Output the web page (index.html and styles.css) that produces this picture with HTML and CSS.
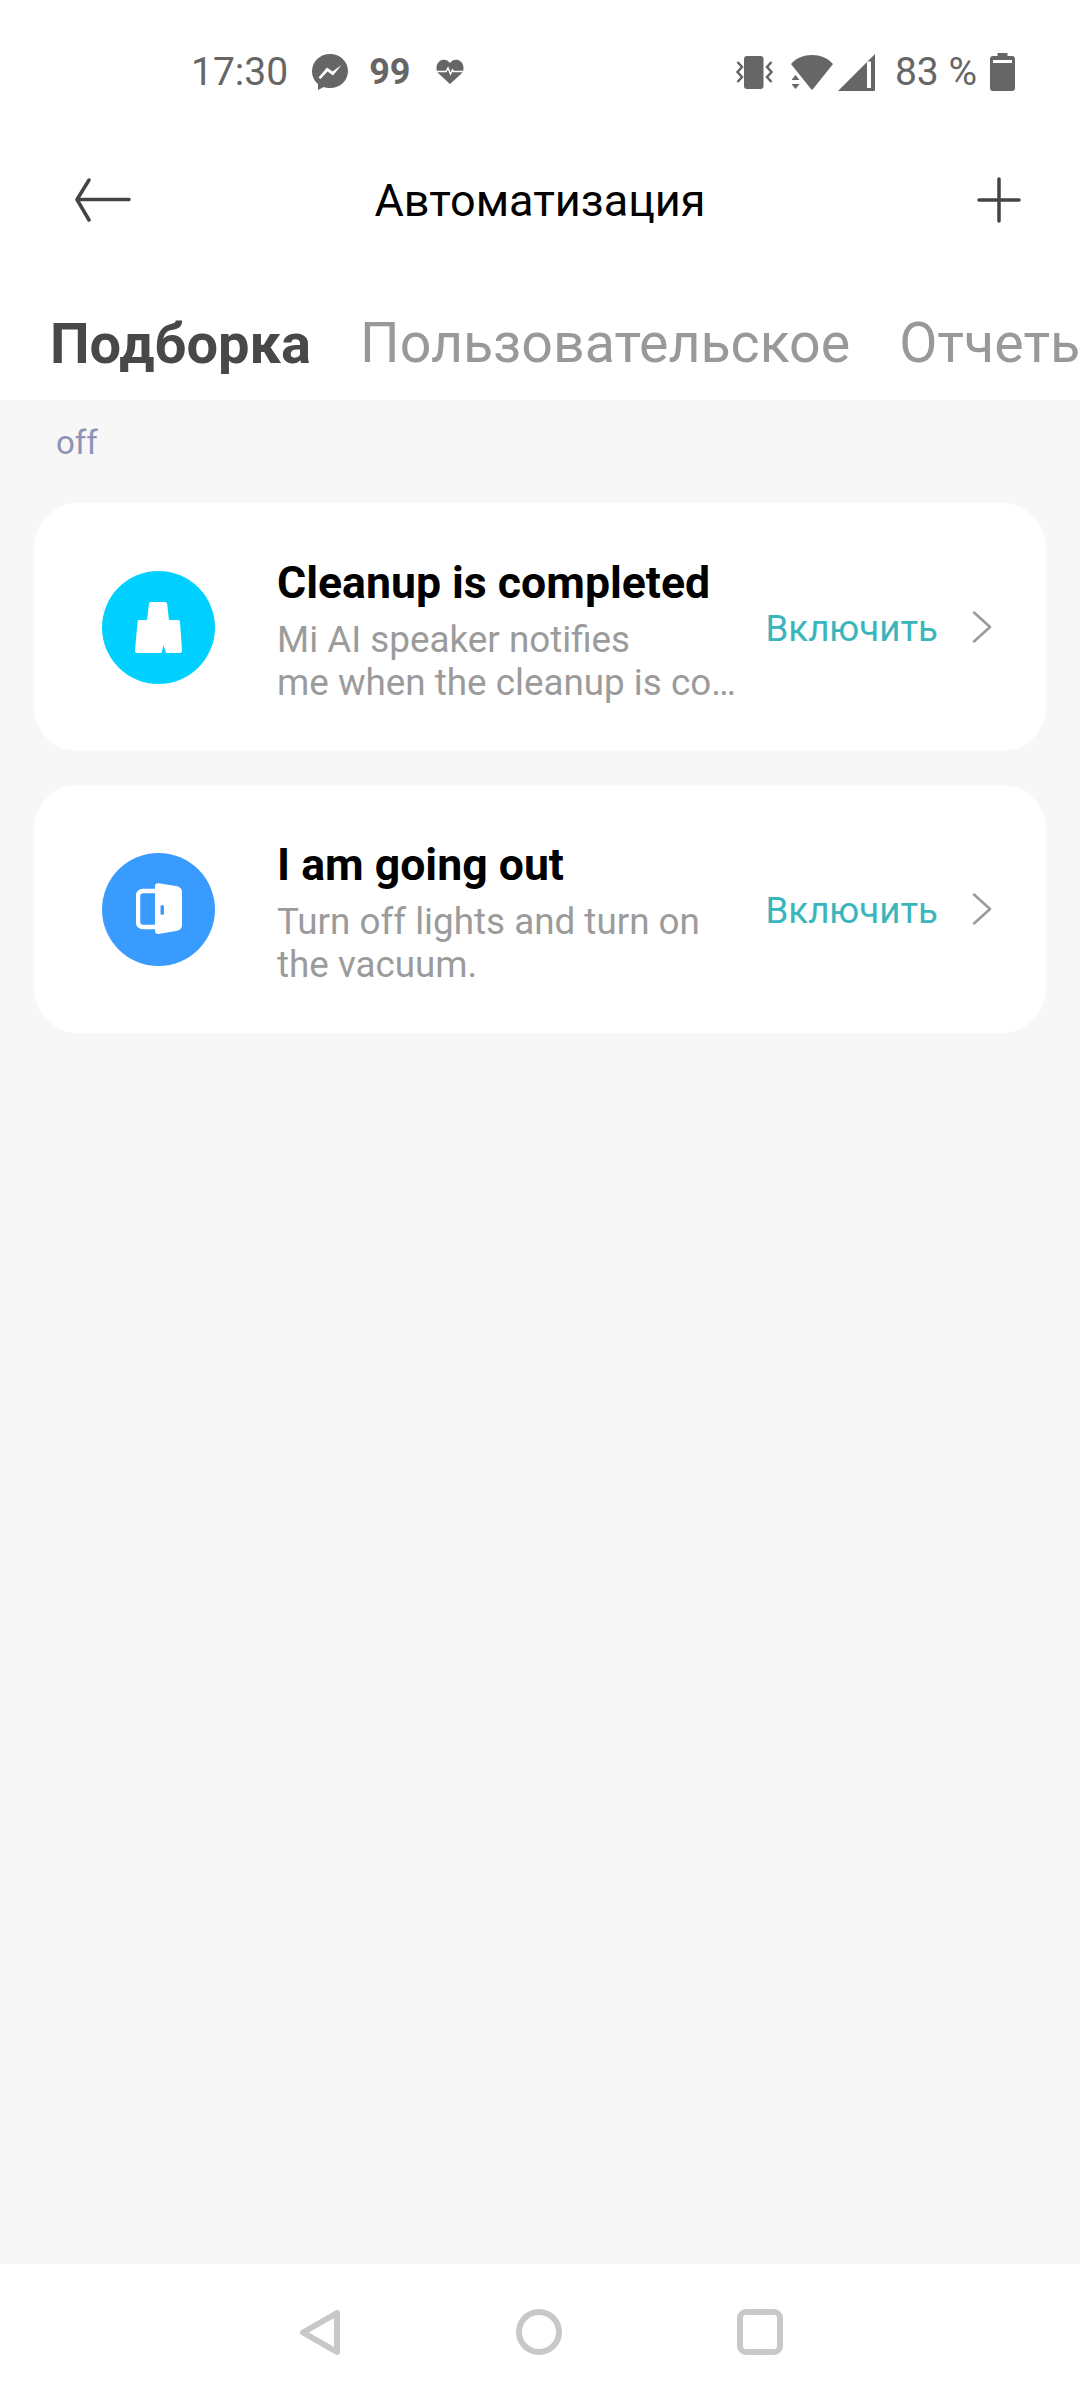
FILE: index.html
```html
<!DOCTYPE html>
<html>
<head>
    <title>Автоматизация</title>
    <link rel="stylesheet" href="styles.css">
</head>
<body>
    <div class="top">
        <div class="status">
            <div class="status-left">
                <span class="time">17:30</span>
                <svg class="ic-msg" width="36" height="36" viewBox="0 0 36 36"><path fill="#666" d="M18 0C8 0 0 7.500 0 17.500C0 22.600 2.200 27 6 30L6 36L11.800 33C13.500 33.600 15.700 34 18 34C28 34 36 26.900 36 17C36 7.500 28 0 18 0Z"/><path fill="#fff" d="M6.500 23.500L15 13.500L20.500 17.500L29.500 11L21 21.500L15.500 17.500L8.500 25Z"/></svg>
                <span class="count">99</span>
                <svg class="ic-heart" width="28" height="26" viewBox="0 0 28 26"><path fill="#666" d="M14 25L2.500 14.500C-0.500 11 0 5.500 3 2.700C6.500 -0.500 11.500 0.300 14 4C16.500 0.300 21.500 -0.500 25 2.700C28 5.500 28.500 11 25.500 14.500Z"/><path fill="none" stroke="#fff" stroke-width="1.500" d="M0 12.500H10L12 9L14.500 15L16.500 11L17.500 12.500H28"/></svg>
            </div>
            <div class="status-right">
                <svg class="ic-vib" width="37" height="33" viewBox="0 0 37 33"><rect x="8" y="0" width="19.500" height="33" rx="3" fill="#666"/><path fill="none" stroke="#666" stroke-width="2.500" d="M1.500 6L6 11L1.500 16L6 21L1.500 26M35.500 6L31 11L35.500 16L31 21L35.500 26"/></svg>
                <svg class="ic-wifi" width="42" height="35" viewBox="0 0 42 35"><path fill="#666" d="M0 9C5 3 13 0 21 0C29 0 37 3 42 9L22 34C21.500 34.700 20.500 34.700 20 34Z"/><path fill="#666" d="M4.500 20L8.500 25H0.500ZM4.500 34L0.500 29H8.500Z"/></svg>
                <svg class="ic-signal" width="37" height="37" viewBox="0 0 37 37"><path fill="#666" d="M37 0V35.500C37 36.500 36.500 37 35.500 37H0Z"/><path fill="#fff" d="M29 7.500H33V34H29Z"/></svg>
                <span class="batt-text">83 %</span>
                <svg class="ic-batt" width="25" height="38" viewBox="0 0 25 38"><path fill="#666" d="M7.500 0H17.500V3H22C24 3 25 4 25 6V35C25 37 24 38 22 38H3C1 38 0 37 0 35V6C0 4 1 3 3 3H7.500Z"/><rect x="3" y="7" width="19" height="3" fill="#fff"/></svg>
            </div>
        </div>

        <div class="header">
            <svg class="ic-back" width="56" height="44" viewBox="0 0 56 44"><path fill="none" stroke="#444" stroke-width="3.500" stroke-linecap="round" stroke-linejoin="round" d="M54 21.500H2M14 2L2 21.500L14 42"/></svg>
            <h1>Автоматизация</h1>
            <svg class="ic-plus" width="44" height="46" viewBox="0 0 44 46"><path fill="none" stroke="#444" stroke-width="3.500" stroke-linecap="round" d="M22 2V44M2 23H42"/></svg>
        </div>

        <div class="tabs">
            <span class="tab active">Подборка</span>
            <span class="tab">Пользовательское</span>
            <span class="tab">Отчеты</span>
        </div>
    </div>

    <div class="content">
        <div class="section-label">off</div>

        <div class="card">
            <div class="round cyan">
                <svg width="47" height="51" viewBox="0 0 47 51"><path fill="#fff" d="M16 0H30C31.500 0 32 1 32.200 2L34 18H43C44.500 18 45 19 45 20L47 48.500C47 50 46.500 51 45 51H31L28.500 43L26.500 51H2C0.500 51 0 50 0 48.500L2.500 20C2.500 19 3 18 4.500 18H12L14 2C14 1 14.500 0 16 0Z"/></svg>
            </div>
            <div class="card-text">
                <div class="card-title">Cleanup is completed</div>
                <div class="card-desc">Mi AI speaker notifies<br>me when the cleanup is co…</div>
            </div>
            <span class="action">Включить</span>
            <svg class="ic-chevron" width="20" height="32" viewBox="0 0 20 32"><path fill="none" stroke="#999" stroke-width="2.500" stroke-linecap="round" stroke-linejoin="round" d="M2 1.500L18 16L2 30.500"/></svg>
        </div>

        <div class="card">
            <div class="round blue">
                <svg width="46" height="52" viewBox="0 0 46 52"><path fill="none" stroke="#fff" stroke-width="4.500" d="M20 8H7C4 8 2 10 2 13V39C2 42 4 44 7 44H20"/><path fill="#fff" d="M19 3C19 1 20.500 0 22.500 0.300L40 3C43.500 3.500 46 5.500 46 9V42C46 45.500 43.500 47.500 40 48L22.500 51C20.500 51.300 19 50 19 48Z"/><rect x="24.500" y="22" width="3.500" height="10" rx="1.700" fill="#3a9bff"/></svg>
            </div>
            <div class="card-text">
                <div class="card-title">I am going out</div>
                <div class="card-desc">Turn off lights and turn on<br>the vacuum.</div>
            </div>
            <span class="action">Включить</span>
            <svg class="ic-chevron" width="20" height="32" viewBox="0 0 20 32"><path fill="none" stroke="#999" stroke-width="2.500" stroke-linecap="round" stroke-linejoin="round" d="M2 1.500L18 16L2 30.500"/></svg>
        </div>
    </div>

    <div class="navbar">
        <svg width="42" height="47" viewBox="0 0 42 47"><path fill="none" stroke="#c8c8c8" stroke-width="6" stroke-linejoin="round" d="M38 4V43L4 23.500Z"/></svg>
        <svg width="46" height="46" viewBox="0 0 46 46"><circle cx="23" cy="23" r="20" fill="none" stroke="#c8c8c8" stroke-width="6"/></svg>
        <svg width="46" height="46" viewBox="0 0 46 46"><rect x="3" y="3" width="40" height="40" rx="6" fill="none" stroke="#c8c8c8" stroke-width="6"/></svg>
    </div>
</body>
</html>
```

FILE: styles.css
```css
html, body {
    margin: 0;
    padding: 0;
}

body {
    width: 1080px;
    height: 2400px;
    overflow: hidden;
    display: flex;
    flex-direction: column;
    font-family: Roboto, sans-serif;
    background-color: #f7f7f7;
}

.top {
    background-color: #fff;
    height: 400px;
}

.status {
    height: 72px;
    padding: 36px 65px 0 191px;
    display: flex;
    align-items: center;
    justify-content: space-between;
    color: #666;
}

.status-left,
.status-right {
    display: flex;
    align-items: center;
}

.time {
    font-size: 39px;
    margin-right: 24px;
}

.count {
    font-size: 36px;
    font-weight: 700;
    margin: 0 26px 0 21px;
}

.ic-vib {
    margin-right: 18px;
}

.ic-signal {
    margin-left: 5px;
}

.batt-text {
    font-size: 39px;
    margin: 0 13px 0 20px;
}

.header {
    height: 110px;
    margin-top: 37px;
    padding: 0 59px;
    display: grid;
    grid-template-columns: 1fr auto 1fr;
    align-items: center;
}

.ic-back {
    margin-left: 16px;
}

.ic-plus {
    justify-self: end;
}

h1 {
    margin: 0;
    font-size: 45px;
    font-weight: 400;
    color: #000;
}

.tabs {
    display: flex;
    gap: 49px;
    margin-top: 56px;
    padding-left: 50px;
    white-space: nowrap;
    overflow: hidden;
}

.tab {
    font-size: 55.5px;
    line-height: 66px;
    color: #999;
}

.tab.active {
    font-size: 56px;
    font-weight: 700;
    color: #484848;
}

.content {
    flex: 1;
    padding: 0 34px;
}

.section-label {
    padding: 23px 0 0 22px;
    height: 80px;
    font-size: 33px;
    color: #8c93b4;
}

.card {
    height: 248px;
    margin-bottom: 34px;
    background-color: #fff;
    border-radius: 44px;
    display: flex;
    align-items: center;
    padding: 0 54px 0 68px;
}

.round {
    width: 113px;
    height: 113px;
    border-radius: 50%;
    flex-shrink: 0;
    display: flex;
    align-items: center;
    justify-content: center;
}

.cyan {
    background-color: #00d0ff;
}

.blue {
    background-color: #3a9bff;
}

.card-text {
    flex: 1;
    margin-left: 62px;
    padding-top: 4px;
}

.card-title {
    font-size: 44.6px;
    font-weight: 700;
    color: #000;
    line-height: 56px;
}

.card-desc {
    font-size: 36.8px;
    line-height: 43px;
    color: #9b9b9b;
    margin-top: 7px;
}

.action {
    font-size: 36.7px;
    color: #3ab5bb;
    margin-right: 34px;
    padding-top: 2px;
}

.navbar {
    height: 136px;
    background-color: #fff;
    display: flex;
    align-items: center;
    justify-content: center;
    gap: 175px;
    padding-left: 2px;
}
```
